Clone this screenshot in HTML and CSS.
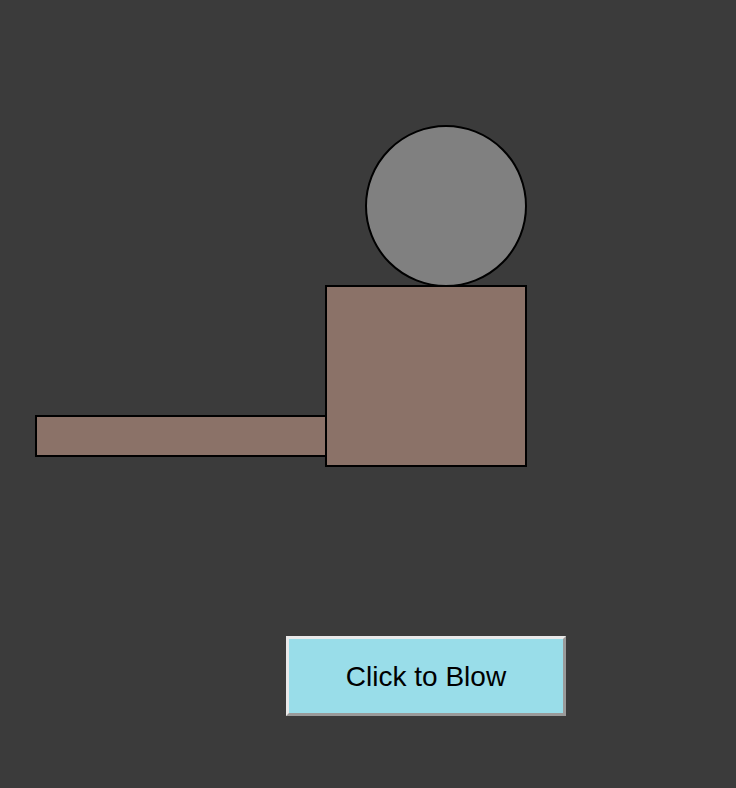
FILE: index.html
```html
<!DOCTYPE html>
<html>
<head>
<meta charset="utf-8">
<link rel="stylesheet" href="styles.css">
</head>
<body>
<div class="scene">
  <div class="shape bar"></div>
  <div class="shape head"></div>
  <div class="shape body"></div>
</div>
<div class="controls">
  <button class="blow-btn">Click to Blow</button>
</div>
</body>
</html>
```
FILE: styles.css
```css
html, body {
  margin: 0;
  padding: 0;
  background: #3b3b3b;
}
body {
  width: 736px;
  height: 788px;
  overflow: hidden;
  font-family: "Liberation Sans", Arial, sans-serif;
}
.scene {
  position: relative;
  height: 636px;
}
.shape {
  position: absolute;
  box-sizing: border-box;
  border: 2px solid #000;
}
.bar {
  left: 35px;
  top: 415px;
  width: 292px;
  height: 42px;
  background: #8b7268;
}
.head {
  left: 365px;
  top: 125px;
  width: 162px;
  height: 162px;
  border-radius: 50%;
  background: #808080;
}
.body {
  left: 325px;
  top: 285px;
  width: 202px;
  height: 182px;
  background: #8b7268;
}
.controls {
  display: flex;
  padding-left: 286px;
}
.blow-btn {
  box-sizing: border-box;
  width: 280px;
  height: 80px;
  margin: 0;
  padding: 2px 0 0 0;
  background: #99dde9;
  border-style: solid;
  border-width: 3px;
  border-color: #e9e9e9 #9a9a9a #9a9a9a #e9e9e9;
  font-family: "Liberation Sans", Arial, sans-serif;
  font-size: 28px;
  color: #000;
}
```
